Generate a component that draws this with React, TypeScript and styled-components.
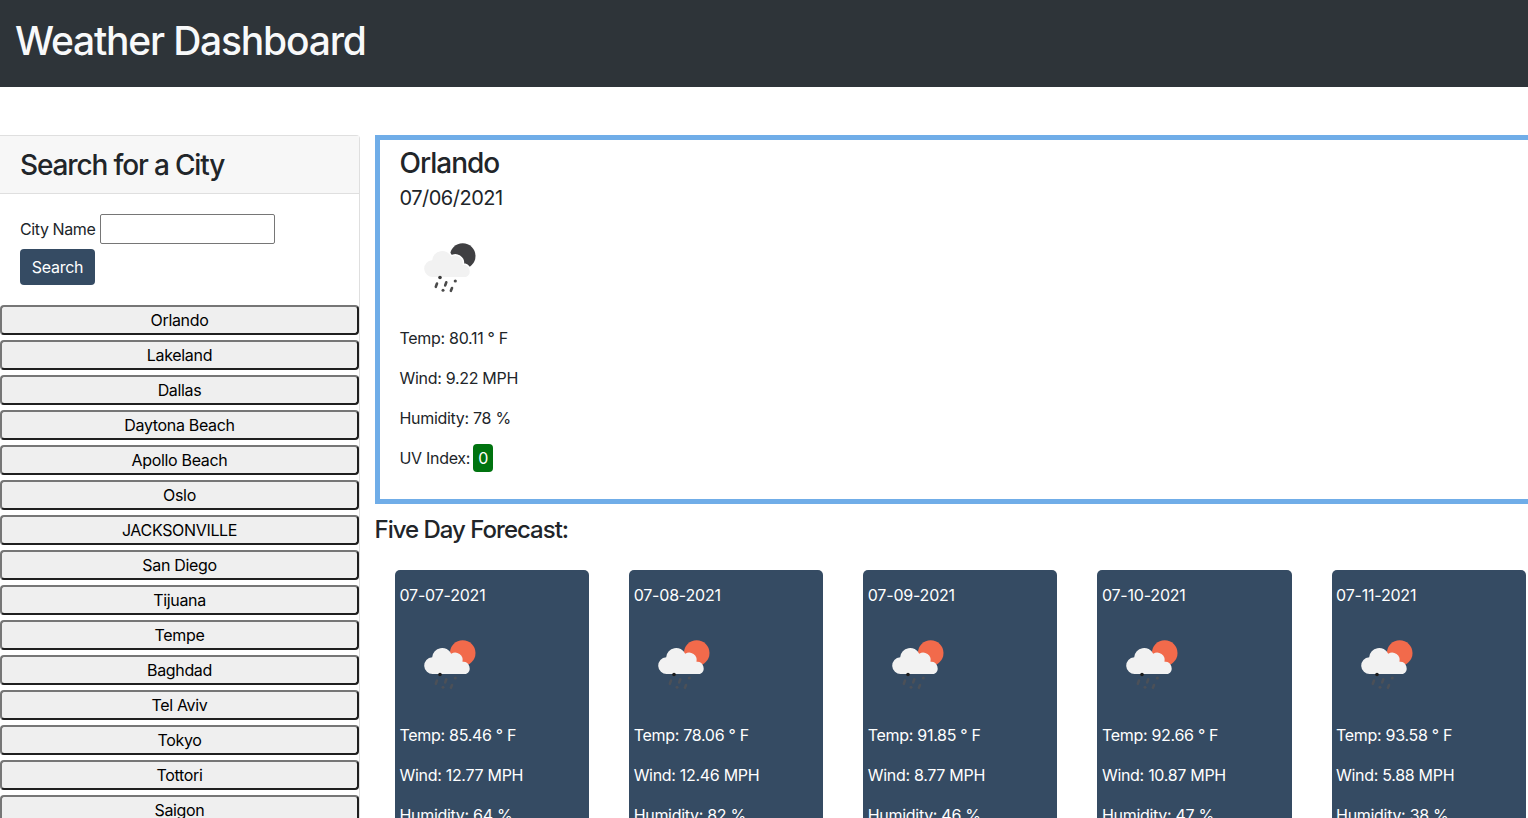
import React from "react";
import styled, { createGlobalStyle } from "styled-components";

const Global = createGlobalStyle`
  html, body { margin: 0; padding: 0; background: #fff; overflow: hidden; height: 100%; }
  body { font-family: Inter, "Liberation Sans", sans-serif; font-size: 16px; line-height: 24px; color: #212529; }
  * { box-sizing: border-box; }
`;

const Page = styled.div`
  width: 1528px;
  height: 818px;
  overflow: hidden;
`;
const Header = styled.header`
  height: 87px;
  background: #2e3439;
  color: #f8f9fa;
  display: flex;
  align-items: center;
  padding: 0 15px 6px;
`;
const Title = styled.h1`
  margin: 0;
  font-size: 39px;
  line-height: 48px;
  font-weight: 500;
  letter-spacing: -1.2px;
`;
const Body = styled.div`
  display: grid;
  grid-template-columns: 360px 1fr;
  column-gap: 15px;
  padding-top: 48px;
`;
const Side = styled.aside`
  border: 1px solid #dfdfdf;
  border-left: 0;
  border-radius: 0 4px 0 0;
`;
const SideHead = styled.div`
  height: 58px;
  padding: 0 20px;
  background: #f7f7f7;
  border-bottom: 1px solid #dfdfdf;
  display: flex;
  align-items: center;
`;
const SideTitle = styled.h3`
  margin: 0;
  font-size: 28px;
  line-height: 34px;
  font-weight: 500;
  letter-spacing: -1.15px;
`;
const SearchForm = styled.form`
  padding: 20px 20px 20px;
`;
const FieldRow = styled.div`
  display: flex;
  align-items: center;
  gap: 4px;
  height: 30px;
`;
const Label = styled.label`
  width: 76px;
  flex: none;
  letter-spacing: -0.4px;
  white-space: nowrap;
`;
const CityInput = styled.input`
  width: 175px;
  height: 30px;
  border: 1px solid #767676;
  border-radius: 2px;
  background: #fff;
  padding: 1px 2px;
`;
const SearchButton = styled.button`
  display: block;
  margin-top: 5px;
  width: 75px;
  height: 36px;
  padding: 0;
  border: 0;
  border-radius: 4px;
  background: #354b63;
  color: #fff;
  font: inherit;
  letter-spacing: -0.3px;
`;
const CityList = styled.div`
  display: flex;
  flex-direction: column;
  gap: 5px;
`;
const CityButton = styled.button`
  width: 359px;
  height: 30px;
  padding: 0;
  flex: none;
  background: #efefef;
  border: 2px solid;
  border-color: #767676 #1f1f1f #1f1f1f #767676;
  border-radius: 4px;
  color: #000;
  font: inherit;
  letter-spacing: -0.33px;
`;
const Main = styled.main`
  min-width: 0;
`;
const Current = styled.section`
  width: 1300px;
  height: 369px;
  border: 5px solid #70ade8;
  padding: 6px 19.5px 0;
`;
const CityName = styled.h3`
  margin: 0 0 6px;
  font-size: 28px;
  line-height: 34px;
  font-weight: 500;
  letter-spacing: -1px;
`;
const DateText = styled.h5`
  margin: 0;
  font-size: 20px;
  line-height: 24px;
  font-weight: 400;
  letter-spacing: -0.5px;
`;
const Icon = styled.svg`
  display: block;
  width: 100px;
  height: 100px;
  margin: 8px 0 8px 0.5px;
`;
const Stat = styled.p`
  margin: 0 0 16px;
  line-height: 24px;
  letter-spacing: -0.3px;
  white-space: nowrap;
`;
const UvBadge = styled.span`
  display: inline-block;
  min-width: 20px;
  height: 28px;
  line-height: 28px;
  margin: -2px 0 -2px -1px;
  text-align: center;
  background: #00730f;
  color: #fff;
  border-radius: 4px;
  letter-spacing: 0;
`;
const ForecastTitle = styled.h4`
  margin: 11px 0 26px -0.5px;
  font-size: 24px;
  line-height: 29px;
  font-weight: 500;
  letter-spacing: -1px;
`;
const ForecastRow = styled.div`
  display: flex;
  gap: 40.05px;
  padding-left: 20px;
`;
const ForecastCard = styled.article`
  width: 194.1px;
  flex: none;
  height: 300px;
  padding: 13px 4.5px;
  background: #354b63;
  color: #fff;
  border-radius: 5px;
`;
const CardDate = styled.div`
  line-height: 24px;
  letter-spacing: -0.2px;
`;

const Weather: React.FC<{ sun: string; halo: string; drop: string; dot: string }> = ({ sun, halo, drop, dot }) => (
  <Icon viewBox="0 0 100 100">
    <circle cx="62.7" cy="38" r="12.8" fill={sun} />
    <path
      d="M33 59 a8 8 0 0 1 -.8 -16.8 a10 10 0 0 1 19 -3.5 a7.5 7.5 0 0 1 11.3 8 a6.5 6.5 0 0 1 3.5 12.3 Z"
      fill="#f2f2f2"
      stroke={halo}
      strokeWidth="3"
      paintOrder="stroke"
    />
    <circle cx="40" cy="59.5" r="1.8" fill={dot} />
    <circle cx="55.3" cy="63" r="1.6" fill={drop} />
    <circle cx="43" cy="72.3" r="1.5" fill={drop} />
    <g stroke={drop} strokeWidth="2.6" strokeLinecap="round">
      <path d="M37 65.5 L35.8 68.8" />
      <path d="M46.3 64.3 L45.2 67.4" />
      <path d="M52 70 L50.9 72.8" />
    </g>
  </Icon>
);

const cities = [
  "Orlando", "Lakeland", "Dallas", "Daytona Beach", "Apollo Beach", "Oslo", "JACKSONVILLE",
  "San Diego", "Tijuana", "Tempe", "Baghdad", "Tel Aviv", "Tokyo", "Tottori", "Saigon",
];
const days = [
  { date: "07-07-2021", temp: "85.46", wind: "12.77", hum: "64" },
  { date: "07-08-2021", temp: "78.06", wind: "12.46", hum: "82" },
  { date: "07-09-2021", temp: "91.85", wind: "8.77", hum: "46" },
  { date: "07-10-2021", temp: "92.66", wind: "10.87", hum: "47" },
  { date: "07-11-2021", temp: "93.58", wind: "5.88", hum: "38" },
];

export default function App() {
  return (
    <Page>
      <Global />
      <Header>
        <Title>Weather Dashboard</Title>
      </Header>
      <Body>
        <Side>
          <SideHead>
            <SideTitle>Search for a City</SideTitle>
          </SideHead>
          <SearchForm onSubmit={(e) => e.preventDefault()}>
            <FieldRow>
              <Label htmlFor="city">City Name</Label>
              <CityInput id="city" type="text" />
            </FieldRow>
            <SearchButton type="submit">Search</SearchButton>
          </SearchForm>
          <CityList>
            {cities.map((c) => (
              <CityButton key={c} type="button">{c}</CityButton>
            ))}
          </CityList>
        </Side>
        <Main>
          <Current>
            <CityName>Orlando</CityName>
            <DateText>07/06/2021</DateText>
            <Weather sun="#3f3f42" halo="#ffffff" drop="#4a4a4a" dot="#3a3a3a" />
            <Stat>Temp: 80.11 ° F</Stat>
            <Stat>Wind: 9.22 MPH</Stat>
            <Stat>Humidity: 78 %</Stat>
            <Stat>UV Index: <UvBadge>0</UvBadge></Stat>
          </Current>
          <ForecastTitle>Five Day Forecast:</ForecastTitle>
          <ForecastRow>
            {days.map((d) => (
              <ForecastCard key={d.date}>
                <CardDate>{d.date}</CardDate>
                <Weather sun="#f26a4b" halo="none" drop="#4b5058" dot="#1c1c1c" />
                <Stat>Temp: {d.temp} ° F</Stat>
                <Stat>Wind: {d.wind} MPH</Stat>
                <Stat>Humidity: {d.hum} %</Stat>
              </ForecastCard>
            ))}
          </ForecastRow>
        </Main>
      </Body>
    </Page>
  );
}
